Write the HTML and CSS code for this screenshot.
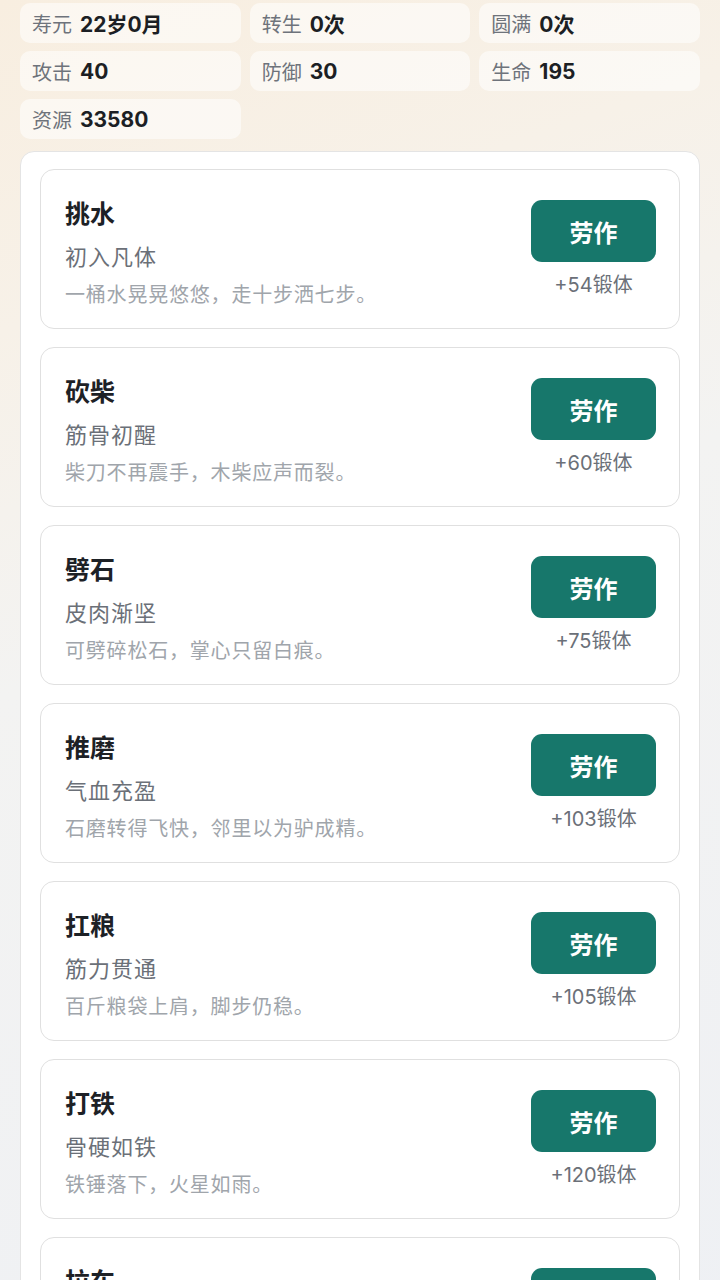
FILE: index.html
```html
<!DOCTYPE html>
<html lang="zh-CN">
<head>
<meta charset="utf-8">
<title>劳作</title>
<link rel="stylesheet" href="styles.css">
</head>
<body>
<div class="page">
  <div class="stats">
    <div class="chip"><span class="label">寿元</span><span class="value">22岁0月</span></div>
    <div class="chip"><span class="label">转生</span><span class="value">0次</span></div>
    <div class="chip"><span class="label">圆满</span><span class="value">0次</span></div>
    <div class="chip"><span class="label">攻击</span><span class="value">40</span></div>
    <div class="chip"><span class="label">防御</span><span class="value">30</span></div>
    <div class="chip"><span class="label">生命</span><span class="value">195</span></div>
    <div class="chip"><span class="label">资源</span><span class="value">33580</span></div>
  </div>

  <div class="panel">
    <div class="card">
      <div class="info">
        <div class="title">挑水</div>
        <div class="sub">初入凡体</div>
        <div class="desc">一桶水晃晃悠悠，走十步洒七步。</div>
      </div>
      <div class="action">
        <button class="btn">劳作</button>
        <div class="reward">+54锻体</div>
      </div>
    </div>
    <div class="card">
      <div class="info">
        <div class="title">砍柴</div>
        <div class="sub">筋骨初醒</div>
        <div class="desc">柴刀不再震手，木柴应声而裂。</div>
      </div>
      <div class="action">
        <button class="btn">劳作</button>
        <div class="reward">+60锻体</div>
      </div>
    </div>
    <div class="card">
      <div class="info">
        <div class="title">劈石</div>
        <div class="sub">皮肉渐坚</div>
        <div class="desc">可劈碎松石，掌心只留白痕。</div>
      </div>
      <div class="action">
        <button class="btn">劳作</button>
        <div class="reward">+75锻体</div>
      </div>
    </div>
    <div class="card">
      <div class="info">
        <div class="title">推磨</div>
        <div class="sub">气血充盈</div>
        <div class="desc">石磨转得飞快，邻里以为驴成精。</div>
      </div>
      <div class="action">
        <button class="btn">劳作</button>
        <div class="reward">+103锻体</div>
      </div>
    </div>
    <div class="card">
      <div class="info">
        <div class="title">扛粮</div>
        <div class="sub">筋力贯通</div>
        <div class="desc">百斤粮袋上肩，脚步仍稳。</div>
      </div>
      <div class="action">
        <button class="btn">劳作</button>
        <div class="reward">+105锻体</div>
      </div>
    </div>
    <div class="card">
      <div class="info">
        <div class="title">打铁</div>
        <div class="sub">骨硬如铁</div>
        <div class="desc">铁锤落下，火星如雨。</div>
      </div>
      <div class="action">
        <button class="btn">劳作</button>
        <div class="reward">+120锻体</div>
      </div>
    </div>
    <div class="card">
      <div class="info">
        <div class="title">拉车</div>
        <div class="sub">力拔千钧</div>
        <div class="desc">独自拉动满载的货车。</div>
      </div>
      <div class="action">
        <button class="btn">劳作</button>
        <div class="reward">+140锻体</div>
      </div>
    </div>
  </div>
</div>
</body>
</html>
```

FILE: styles.css
```css
html, body {
  margin: 0;
  padding: 0;
}
body {
  font-family: "Inter", "Noto Sans CJK SC", "Noto Sans", sans-serif;
  background: linear-gradient(160deg, #f8eee0 0%, #f7f1e8 20%, #f3f3f2 42%, #eef0f4 100%);
  min-height: 1280px;
  overflow: hidden;
}
.page {
  padding: 3px 20px 0 20px;
}
.stats {
  display: grid;
  grid-template-columns: repeat(3, 1fr);
  column-gap: 9px;
  row-gap: 8px;
}
.chip {
  height: 40px;
  border-radius: 10px;
  background: rgba(255, 255, 255, 0.55);
  display: flex;
  align-items: center;
  padding-left: 12px;
  gap: 8px;
  font-size: 20px;
}
.label {
  color: #6e737b;
}
.value {
  color: #1c1f24;
  font-weight: 700;
  font-size: 21px;
}
.panel {
  margin-top: 12px;
  background: #ffffff;
  border: 1px solid #e4e4e4;
  border-radius: 14px;
  padding: 17px 19px 0 19px;
  display: flex;
  flex-direction: column;
  gap: 18px;
}
.card {
  border: 1.5px solid #e0e0e0;
  border-radius: 14px;
  background: #ffffff;
  height: 160px;
  box-sizing: border-box;
  padding: 0 23px 0 24px;
  display: flex;
  align-items: center;
  justify-content: space-between;
  flex-shrink: 0;
}
.info {
  display: flex;
  flex-direction: column;
  padding-top: 8px;
}
.title {
  font-size: 25px;
  font-weight: 700;
  color: #1d2126;
  line-height: 32px;
}
.sub {
  font-size: 22px;
  color: #6b7078;
  line-height: 30px;
  margin-top: 12px;
  letter-spacing: 1px;
}
.desc {
  font-size: 20px;
  color: #a0a5ab;
  line-height: 28px;
  margin-top: 9px;
  letter-spacing: 0.8px;
}
.action {
  display: flex;
  flex-direction: column;
  align-items: center;
  gap: 10px;
}
.btn {
  width: 125px;
  height: 62px;
  border: none;
  border-radius: 11px;
  background: #17776b;
  color: #ffffff;
  font-family: inherit;
  font-size: 24px;
  font-weight: 700;
  padding: 0;
}
.reward {
  font-size: 20px;
  color: #6b7078;
  line-height: 26px;
}
```
